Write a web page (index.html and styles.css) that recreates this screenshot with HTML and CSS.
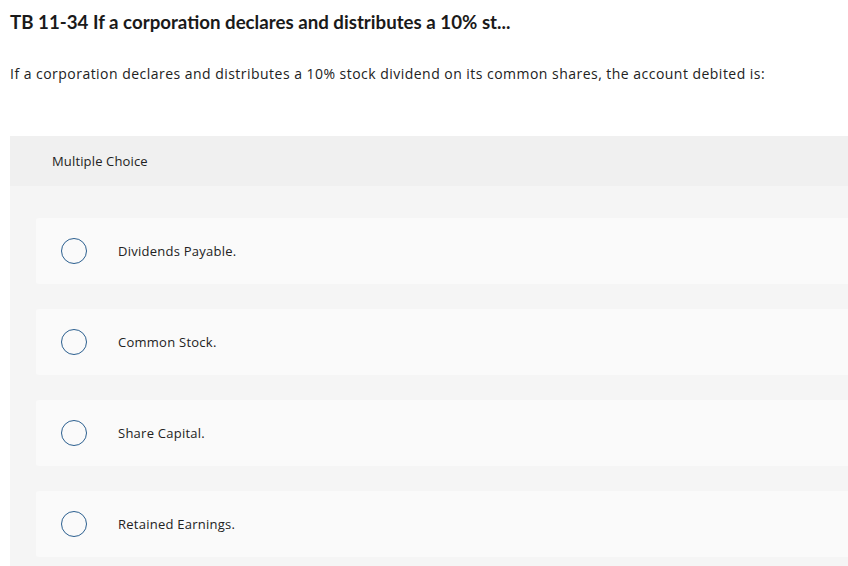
FILE: index.html
```html
<!DOCTYPE html>
<html>
<head>
<meta charset="utf-8">
<link rel="stylesheet" href="styles.css">
</head>
<body>
<div class="page">
  <h1 class="title">TB 11-34 If a corporation declares and distributes a 10% st...</h1>
  <p class="question">If a corporation declares and distributes a 10% stock dividend on its common shares, the account debited is:</p>
  <section class="panel">
    <div class="panel-head">Multiple Choice</div>
    <div class="panel-body">
      <div class="option"><span class="radio"></span><span class="label">Dividends Payable.</span></div>
      <div class="option"><span class="radio"></span><span class="label">Common Stock.</span></div>
      <div class="option"><span class="radio"></span><span class="label">Share Capital.</span></div>
      <div class="option"><span class="radio"></span><span class="label">Retained Earnings.</span></div>
    </div>
  </section>
</div>
</body>
</html>
```
FILE: styles.css
```css
html, body {
  margin: 0;
  padding: 0;
  background: #fff;
  overflow: hidden;
}
body {
  font-family: "Open Sans", Lato, sans-serif;
  color: #222;
}
.page {
  padding: 10px 0 0 10px;
}
.title {
  margin: 0;
  font-family: Lato, "Open Sans", sans-serif;
  font-size: 18.7px;
  font-weight: 700;
  line-height: 24px;
  color: #1a1a1a;
}
.question {
  margin: 30px 0 0;
  font-size: 14px;
  line-height: 20px;
  color: #222;
  letter-spacing: 0.47px;
}
.panel {
  margin-top: 52px;
}
.panel-head {
  background: #f0f0f0;
  height: 50px;
  display: flex;
  align-items: center;
  padding-left: 42px;
  font-size: 13px;
  letter-spacing: 0.15px;
}
.panel-body {
  background: #f5f5f5;
  padding: 32px 0 20px 26px;
  display: flex;
  flex-direction: column;
  gap: 25px;
}
.option {
  background: #fafafa;
  height: 66px;
  border-radius: 3px 0 0 3px;
  display: flex;
  align-items: center;
  padding-left: 25px;
}
.radio {
  width: 24px;
  height: 24px;
  border: 1.5px solid #2b5f8f;
  border-radius: 50%;
  flex: none;
}
.label {
  margin-left: 31px;
  font-size: 13px;
  color: #222;
  letter-spacing: 0.25px;
}
```
